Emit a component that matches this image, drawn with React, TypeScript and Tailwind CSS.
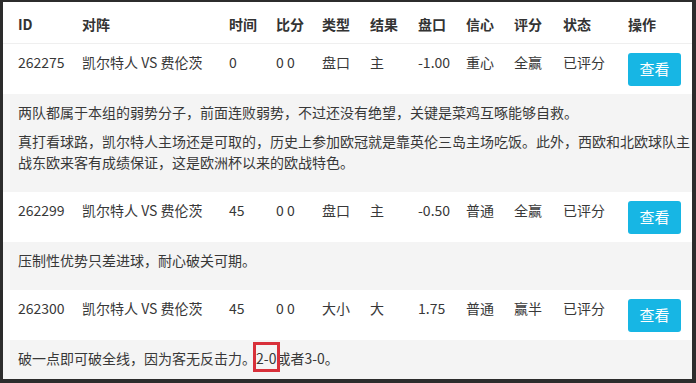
const cols =
  'grid grid-cols-[64px_147px_47px_46px_48px_48px_48px_48px_49px_65px_1fr]'

type Match = {
  id: string
  time: string
  score: string
  kind: string
  result: string
  line: string
  trust: string
  rating: string
  status: string
}

const headers = ['ID', '对阵', '时间', '比分', '类型', '结果', '盘口', '信心', '评分', '状态', '操作']

const matches: { row: Match; notes: React.ReactNode[] }[] = [
  {
    row: {
      id: '262275',
      time: '0',
      score: '0 0',
      kind: '盘口',
      result: '主',
      line: '-1.00',
      trust: '重心',
      rating: '全赢',
      status: '已评分',
    },
    notes: [
      '两队都属于本组的弱势分子，前面连败弱势，不过还没有绝望，关键是菜鸡互啄能够自救。',
      <>
        <span className="block whitespace-nowrap">
          真打看球路，凯尔特人主场还是可取的，历史上参加欧冠就是靠英伦三岛主场吃饭。此外，西欧和北欧球队主
        </span>
        <span className="block whitespace-nowrap">
          战东欧来客有成绩保证，这是欧洲杯以来的欧战特色。
        </span>
      </>,
    ],
  },
  {
    row: {
      id: '262299',
      time: '45',
      score: '0 0',
      kind: '盘口',
      result: '主',
      line: '-0.50',
      trust: '普通',
      rating: '全赢',
      status: '已评分',
    },
    notes: ['压制性优势只差进球，耐心破关可期。'],
  },
  {
    row: {
      id: '262300',
      time: '45',
      score: '0 0',
      kind: '大小',
      result: '大',
      line: '1.75',
      trust: '普通',
      rating: '赢半',
      status: '已评分',
    },
    notes: [
      <>
        破一点即可破全线，因为客无反击力。
        <span className="relative">
          2-0
          <span className="absolute -left-[3px] -right-[4px] -top-[6px] -bottom-[4px] border-[3px] border-[#d8303a]" />
        </span>
        或者3-0。
      </>,
    ],
  },
]

function MatchRow({ m }: { m: Match }) {
  const cells = [m.id, '凯尔特人 VS 费伦茨', m.time, m.score, m.kind, m.result, m.line, m.trust, m.rating, m.status]
  return (
    <div className={`${cols} items-start h-[50px] pt-[8px] pl-[15px] bg-white`}>
      {cells.map((c, i) => (
        <div key={i} className="leading-[21px] whitespace-nowrap">
          {c}
        </div>
      ))}
      <div>
        <button className="mt-px h-[33px] w-[53px] rounded-[3px] bg-[#17b6e4] text-white text-[15px]">
          查看
        </button>
      </div>
    </div>
  )
}

export default function App() {
  return (
    <div className="w-[696px] h-[383px] bg-[#2c2c2c] pl-[3px] pt-[2px] pr-[4px] pb-[4px]">
      <div
        className="h-full bg-white overflow-hidden text-[14px] text-[#383838]"
        style={{ fontFamily: '"Noto Sans CJK SC", "Noto Sans", sans-serif' }}
      >
        <div className={`${cols} items-center h-[42px] pt-[4px] pl-[15px] border-b border-[#efefef] font-bold text-[#333]`}>
          {headers.map((h) => (
            <div key={h}>{h}</div>
          ))}
        </div>

        {matches.map((m) => (
          <div key={m.row.id}>
            <MatchRow m={m.row} />
            <div className="bg-[#f4f4f4] pl-[15px] pt-[8px] pb-[11px]">
              {m.notes.map((n, i) => (
                <p key={i} className="leading-[21px] mb-2">
                  {n}
                </p>
              ))}
            </div>
          </div>
        ))}
      </div>
    </div>
  )
}
